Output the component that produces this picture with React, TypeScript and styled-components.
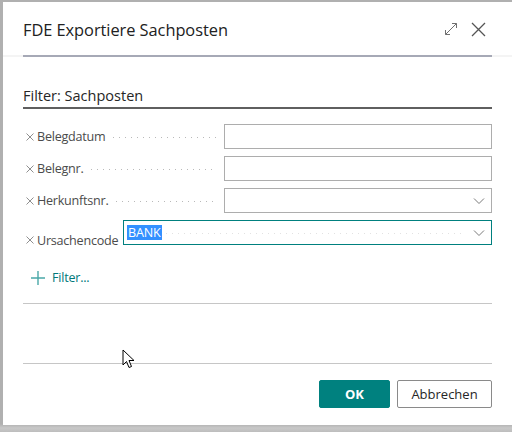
import React from "react";
import styled, { createGlobalStyle } from "styled-components";

const Global = createGlobalStyle`
  html, body { margin: 0; padding: 0; }
  body {
    width: 512px; height: 432px; overflow: hidden;
    background: #ababab;
    font-family: "Segoe UI", "Open Sans", "Noto Sans", sans-serif;
  }
`;

const Backdrop = styled.div`
  position: relative;
  width: 512px;
  height: 432px;
  padding: 2px 0 0 3px;
  box-sizing: border-box;
  background: linear-gradient(to bottom, #b0b0b0 0, #b0b0b0 424px, #c8c8c8 428px, #bdbdbd 432px);
`;

const Dialog = styled.div`
  width: 509px;
  height: 423px;
  background: #fff;
  box-sizing: border-box;
  display: flex;
  flex-direction: column;
`;

const Header = styled.div`
  height: 55px;
  box-sizing: border-box;
  padding: 0 20px 0 20px;
  display: flex;
  align-items: center;
  border-bottom: 2px solid #f4f4f4;
  position: relative;
`;

const HeaderBar = styled.div`
  position: absolute;
  left: 20px;
  right: 20px;
  bottom: -2px;
  height: 2px;
  background: #a6a9b6;
`;

const Title = styled.h1`
  margin: 0;
  flex: 1;
  font-size: 16.4px;
  font-weight: 400;
  color: #212121;
  letter-spacing: -0.05px;
  padding-top: 2px;
`;

const HeaderIcons = styled.div`
  display: flex;
  align-items: center;
  gap: 13px;
  padding-top: 1px;
  padding-right: 6px;
`;

const Body = styled.div`
  padding: 30px 20px 0 20px;
  flex: 1;
  display: flex;
  flex-direction: column;
`;

const SectionTitle = styled.div`
  font-size: 14.5px;
  color: #262626;
  padding-bottom: 2px;
  border-bottom: 2px solid #5f5f5f;
  line-height: 18px;
`;

const Fields = styled.div`
  display: flex;
  flex-direction: column;
  gap: 7px;
  margin-top: 15px;
`;

const Row = styled.div<{ $wide?: boolean }>`
  display: grid;
  grid-template-columns: ${(p) => (p.$wide ? "100px 1fr" : "201px 1fr")};
  height: 25px;
`;

const LabelCell = styled.div<{ $low?: boolean }>`
  display: flex;
  align-items: ${(p) => (p.$low ? "flex-end" : "center")};
  padding-left: 3px;
  padding-right: 7px;
  font-size: 12.6px;
  letter-spacing: -0.25px;
  color: #4b4b4b;
  white-space: nowrap;
  position: relative;
  ${(p) => (p.$low ? "margin-bottom: -4px;" : "")}
`;

const Remove = styled.svg<{ $low?: boolean }>`
  margin-right: 3px;
  flex: none;
  ${(p) => (p.$low ? "margin-bottom: 5px;" : "margin-top: 1px;")}
`;

const Leader = styled.span`
  flex: 1;
  height: 1px;
  margin-left: 8px;
  margin-top: 2px;
  background-image: linear-gradient(to right, #b9b9b9 1px, transparent 1px);
  background-size: 6px 1px;
  background-repeat: repeat-x;
`;

const Input = styled.div<{ $focus?: boolean }>`
  box-sizing: border-box;
  height: 25px;
  border: 1px solid ${(p) => (p.$focus ? "#00807f" : "#adadad")};
  background: #fff;
  display: flex;
  align-items: center;
  padding: 0 6px 0 3px;
  position: relative;
`;

const InnerLeader = styled.span`
  position: absolute;
  left: 36px;
  right: 26px;
  top: 12px;
  height: 1px;
  background-image: linear-gradient(to right, #e2e2e2 1px, transparent 1px);
  background-size: 6px 1px;
  background-repeat: repeat-x;
`;

const Selected = styled.span`
  background: #3390ff;
  color: #fff;
  font-size: 12.6px;
  letter-spacing: -0.2px;
  line-height: 15px;
  padding: 0 1px;
  position: relative;
  z-index: 1;
`;

const Chevron = styled.svg`
  margin-left: auto;
  position: relative;
  z-index: 1;
`;

const AddFilter = styled.div`
  display: flex;
  align-items: center;
  gap: 7px;
  margin-top: 24px;
  padding-left: 8px;
  color: #00787a;
  font-size: 12.5px;
  letter-spacing: -0.2px;
`;

const Divider = styled.div<{ $top: number }>`
  height: 1px;
  background: #c6c6c6;
  margin-top: ${(p) => p.$top}px;
`;

const Footer = styled.div`
  display: flex;
  justify-content: flex-end;
  gap: 7px;
  margin-top: 16px;
`;

const Button = styled.button<{ $primary?: boolean }>`
  height: 28px;
  box-sizing: border-box;
  border-radius: 2px;
  font-family: inherit;
  font-size: 13px;
  cursor: pointer;
  border: 1px solid ${(p) => (p.$primary ? "#00817f" : "#8a8a8a")};
  background: ${(p) => (p.$primary ? "#00817f" : "#fff")};
  color: ${(p) => (p.$primary ? "#fff" : "#262626")};
  font-weight: ${(p) => (p.$primary ? 700 : 400)};
  width: ${(p) => (p.$primary ? "71px" : "95px")};
  padding: 0;
`;

const Cursor = styled.svg`
  position: absolute;
  left: 122px;
  top: 349px;
`;

const fields = [
  { label: "Belegdatum", dropdown: false },
  { label: "Belegnr.", dropdown: false },
  { label: "Herkunftsnr.", dropdown: true },
];

const ChevronIcon = () => (
  <Chevron width="12" height="8" viewBox="0 0 12 8">
    <path d="M1 1.5 L6 6.5 L11 1.5" fill="none" stroke="#7a7a7a" strokeWidth="1" />
  </Chevron>
);

const RemoveIcon = ({ low }: { low?: boolean }) => (
  <Remove $low={low} width="8" height="8" viewBox="0 0 8 8">
    <path d="M0.5 0.5 L7.5 7.5 M7.5 0.5 L0.5 7.5" stroke="#8f8f8f" strokeWidth="1" fill="none" />
  </Remove>
);

export default function App() {
  return (
    <>
      <Global />
      <Backdrop>
        <Dialog>
          <Header>
            <Title>FDE Exportiere Sachposten</Title>
            <HeaderIcons>
              <svg width="14" height="14" viewBox="0 0 14 14">
                <path d="M1.5 12.5 L12.5 1.5 M8 1.5 H12.5 V6 M1.5 8 V12.5 H6" fill="none" stroke="#707070" strokeWidth="1" />
              </svg>
              <svg width="15" height="15" viewBox="0 0 15 15">
                <path d="M1 1 L14 14 M14 1 L1 14" fill="none" stroke="#555" strokeWidth="1.3" />
              </svg>
            </HeaderIcons>
            <HeaderBar />
          </Header>
          <Body>
            <SectionTitle>Filter: Sachposten</SectionTitle>
            <Fields>
              {fields.map((f) => (
                <Row key={f.label}>
                  <LabelCell>
                    <RemoveIcon />
                    {f.label}
                    <Leader />
                  </LabelCell>
                  <Input>{f.dropdown && <ChevronIcon />}</Input>
                </Row>
              ))}
              <Row $wide>
                <LabelCell $low>
                  <RemoveIcon low />
                  Ursachencode
                </LabelCell>
                <Input $focus>
                  <InnerLeader />
                  <Selected>BANK</Selected>
                  <ChevronIcon />
                </Input>
              </Row>
            </Fields>
            <AddFilter>
              <svg width="14" height="14" viewBox="0 0 14 14">
                <path d="M7 0 V14 M0 7 H14" stroke="#4aa8a8" strokeWidth="1.4" />
              </svg>
              Filter...
            </AddFilter>
            <Divider $top={17} />
            <Divider $top={59} />
            <Footer>
              <Button $primary>OK</Button>
              <Button>Abbrechen</Button>
            </Footer>
          </Body>
        </Dialog>
        <Cursor width="13" height="20" viewBox="0 0 13 20">
          <path d="M1 1 L1 16 L4.5 12.5 L7 18.5 L9.5 17.5 L7 11.5 L12 11.5 Z" fill="#fff" stroke="#000" strokeWidth="1" strokeLinejoin="round" />
        </Cursor>
      </Backdrop>
    </>
  );
}
